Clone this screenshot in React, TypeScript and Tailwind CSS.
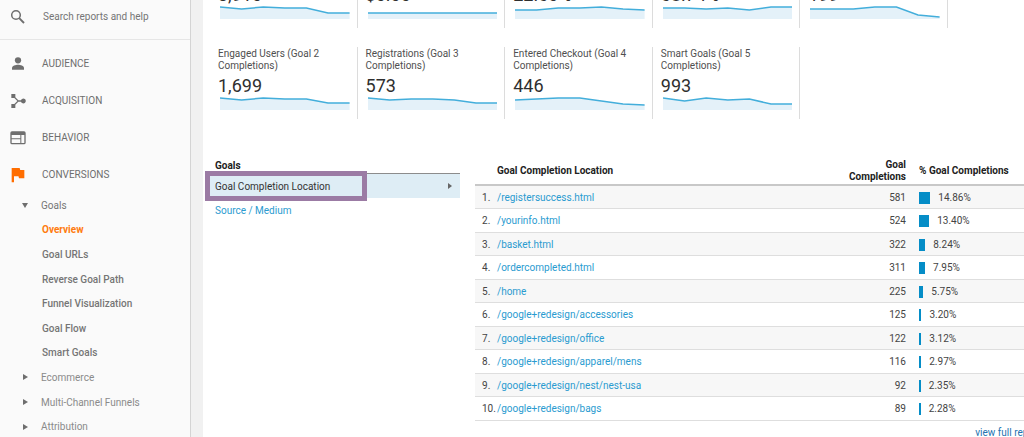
import React from "react";

type Metric = { label: string; value: string; points: number[] };

const topMetrics: Metric[] = [
  { label: "Goal Completions", value: "3,910", points: [1, 3, 1, 2, 2, 7, 7] },
  { label: "Goal Value", value: "$0.00", points: [7, 7, 7, 7, 7, 7, 7] },
  { label: "Goal Conversion Rate", value: "22.60%", points: [4, 4, 2, 2, 1, 3, 4] },
  { label: "Total Abandonment Rate", value: "68.74%", points: [2, 2, 3, 2, 4, 1, 1] },
  { label: "Purchase Completed (Goal 1 Completions)", value: "199", points: [3, 3, 3, 1, 1, 9, 11] },
];

const goalMetrics: Metric[] = [
  { label: "Engaged Users (Goal 2 Completions)", value: "1,699", points: [1, 3, 1, 2, 2, 6, 6] },
  { label: "Registrations (Goal 3 Completions)", value: "573", points: [1, 3, 2, 2, 3, 6, 6] },
  { label: "Entered Checkout (Goal 4 Completions)", value: "446", points: [3, 2, 1, 1, 4, 7, 8] },
  { label: "Smart Goals (Goal 5 Completions)", value: "993", points: [1, 4, 1, 3, 2, 7, 7] },
];

const locations = [
  { path: "/registersuccess.html", count: 581, percent: 14.86 },
  { path: "/yourinfo.html", count: 524, percent: 13.4 },
  { path: "/basket.html", count: 322, percent: 8.24 },
  { path: "/ordercompleted.html", count: 311, percent: 7.95 },
  { path: "/home", count: 225, percent: 5.75 },
  { path: "/google+redesign/accessories", count: 125, percent: 3.2 },
  { path: "/google+redesign/office", count: 122, percent: 3.12 },
  { path: "/google+redesign/apparel/mens", count: 116, percent: 2.97 },
  { path: "/google+redesign/nest/nest-usa", count: 92, percent: 2.35 },
  { path: "/google+redesign/bags", count: 89, percent: 2.28 },
];

const goalPages = ["Overview", "Goal URLs", "Reverse Goal Path", "Funnel Visualization", "Goal Flow", "Smart Goals"];
const groups = ["Ecommerce", "Multi-Channel Funnels", "Attribution"];

function Sparkline({ points }: { points: number[] }) {
  const line = points.map((y, i) => `${(i * 130) / (points.length - 1)},${y}`).join(" ");
  return (
    <svg viewBox="0 0 130 13" preserveAspectRatio="none" className="block h-[13px] w-full" aria-hidden="true">
      <polygon points={`0,13 ${line} 130,13`} fill="#e4f1f9" />
      <polyline points={line} fill="none" stroke="#43aedb" strokeWidth="1.5" />
    </svg>
  );
}

function MetricCard({ label, value, points }: Metric) {
  return (
    <article className="border-r border-[#dcdcdc] pt-px pr-[7px] pb-[9px] pl-2">
      <h3 className="h-6 pr-2 text-[10px] leading-3 text-[#4f4f4f]">{label}</h3>
      <p className="mt-1 text-lg leading-5 text-[#2f2f2f]">{value}</p>
      <div className="mt-px pl-0.5">
        <Sparkline points={points} />
      </div>
    </article>
  );
}

function Icon({ children }: { children: React.ReactNode }) {
  return (
    <svg viewBox="0 0 24 24" className="size-4 shrink-0" fill="currentColor" aria-hidden="true">
      {children}
    </svg>
  );
}

function SectionLink({ label, active, children }: { label: string; active?: boolean; children: React.ReactNode }) {
  return (
    <a href="#" className="flex h-[37px] items-center gap-4 pl-2.5 text-[10px] text-[#6e6e6e]">
      <span className={active ? "text-[#ff6d00]" : "text-[#6e6e6e]"}>
        <Icon>{children}</Icon>
      </span>
      {label}
    </a>
  );
}

function Sidebar() {
  return (
    <aside className="w-[191px] shrink-0 border-r border-[#d4d4d4] bg-[#fafafa]">
      <label className="flex h-10 items-center gap-[17px] border-b border-[#e6e6e6] pb-1.5 pl-2.5 text-[#757575]">
        <svg viewBox="0 0 16 16" className="size-4 shrink-0" fill="none" stroke="#6e6e6e" strokeWidth="1.5" aria-hidden="true">
          <circle cx="6" cy="6" r="4.300" />
          <path d="M9.200 9.200 14 14" strokeWidth="1.9" />
        </svg>
        <input
          type="text"
          aria-label="Search reports and help"
          placeholder="Search reports and help"
          className="w-full bg-transparent text-[10px] outline-none placeholder:text-[#757575]"
        />
      </label>
      <nav className="pt-[5px]">
        <SectionLink label="AUDIENCE">
          <circle cx="12" cy="6.500" r="4.700" />
          <path d="M3 20.500v-2.500c0-3.500 5.500-5 9-5s9 1.500 9 5v2.500z" />
        </SectionLink>
        <SectionLink label="ACQUISITION">
          <path d="M2 1.500h6v5l4.500 4.300h4a3.700 3.700 0 1 1 0 2.400h-4L8 17.500v5H2v-6h4.500l4.500-4.500-4.500-4.500H2z" />
        </SectionLink>
        <SectionLink label="BEHAVIOR">
          <path
            fillRule="evenodd"
            d="M3 2h18a2.500 2.500 0 0 1 2.500 2.500v14.500a2.500 2.500 0 0 1-2.500 2.500H3A2.500 2.500 0 0 1 .5 19V4.500A2.500 2.500 0 0 1 3 2zM2.500 7.500v5h13v-5zM2.500 14v5.500h13V14zM17 7.500v12h4.500v-12z"
          />
        </SectionLink>
        <SectionLink label="CONVERSIONS" active>
          <path d="M2.500 1.500h12l.8 3H21.500v12.500h-8l-.8-3H6V23H2.500z" />
        </SectionLink>
        <ul className="flex h-[246px] flex-col text-[10px] text-[#757575]">
          <li className="flex flex-1 items-center">
            <a href="#" className="flex items-center gap-[13px] pl-[22px]">
              <span className="w-1.5 border-x-[3px] border-t-[5px] border-x-transparent border-t-[#6e6e6e]" />
              Goals
            </a>
          </li>
          {goalPages.map((page, i) => (
            <li key={page} className="flex flex-1 items-center pl-[42px] font-medium">
              <a href="#" className={i === 0 ? "font-bold text-[#ff7a0f]" : ""}>{page}</a>
            </li>
          ))}
          {groups.map((group) => (
            <li key={group} className="flex flex-1 items-center text-[#8a8a8a]">
              <a href="#" className="flex items-center gap-[13px] pl-[23px]">
                <span className="h-1.5 border-y-[3px] border-l-[5px] border-y-transparent border-l-[#6e6e6e]" />
                {group}
              </a>
            </li>
          ))}
        </ul>
      </nav>
    </aside>
  );
}

function Dimensions() {
  return (
    <section className="w-[250px] shrink-0 text-[10px]">
      <h2 className="h-4 border-b border-[#8c8c8c] pt-0.5 pl-[5px] leading-3 font-bold text-[#222]">Goals</h2>
      <div className="relative">
        <a href="#" className="flex h-6 items-center justify-between bg-[#deedf5] pr-2 pl-[5px] text-[#333]">
          Goal Completion Location
          <span className="h-1.5 border-y-[3px] border-l-4 border-y-transparent border-l-[#666]" />
        </a>
        <span className="pointer-events-none absolute -top-[3px] -left-[5px] h-[30px] w-[162px] border-[5px] border-[#9b7ba4]" />
      </div>
      <a href="#" className="flex h-6 items-center pl-[5px] text-[#2a9bd0]">Source / Medium</a>
    </section>
  );
}

function LocationTable() {
  return (
    <section className="-mr-7 min-w-0 flex-1 text-[10px]">
      <table className="w-full table-fixed border-collapse">
        <thead>
          <tr className="h-[27px] border-b-2 border-[#c8c8c8] leading-3 text-[#222]">
            <th className="w-[22px] p-0" aria-label="Rank" />
            <th className="p-0 text-left font-bold">Goal Completion Location</th>
            <th className="w-16 p-0 text-right font-bold">Goal Completions</th>
            <th className="w-[146px] p-0 pl-[13px] text-left font-bold">% Goal Completions</th>
          </tr>
        </thead>
        <tbody>
          {locations.map(({ path, count, percent }, i) => (
            <tr key={path} className="h-6 border-b border-[#dedede] leading-4 text-[#444] odd:h-[23px] odd:bg-[#f7f7f7]">
              <td className="p-0 pt-0.5 pl-[7px] whitespace-nowrap">{i + 1}.</td>
              <td className="p-0 pt-0.5"><a href="#" className="text-[#2a9bd0]">{path}</a></td>
              <td className="p-0 pt-0.5 text-right">{count}</td>
              <td className="p-0 pt-0.5 pl-[13px]">
                <div className="flex items-center gap-2">
                  <span className="h-3 bg-[#058dc7]" style={{ width: `${percent * 0.76}px` }} />
                  {percent.toFixed(2)}%
                </div>
              </td>
            </tr>
          ))}
        </tbody>
      </table>
      <a href="#" className="mt-1 block pr-[11px] text-right leading-4 text-[#2473b0]">view full report</a>
    </section>
  );
}

export default function App() {
  return (
    <div className="flex h-screen overflow-hidden bg-[#f1f1f1] font-[Roboto,sans-serif]">
      <Sidebar />
      <main className="ml-3 min-w-0 flex-1 bg-white pl-[7px]">
        <div className="-mt-11 mr-[76px] grid grid-cols-5 gap-y-[19px]">
          {[...topMetrics, ...goalMetrics].map((metric) => (
            <MetricCard key={metric.label} {...metric} />
          ))}
        </div>
        <div className="mt-[39px] flex gap-[15px]">
          <Dimensions />
          <LocationTable />
        </div>
      </main>
    </div>
  );
}
